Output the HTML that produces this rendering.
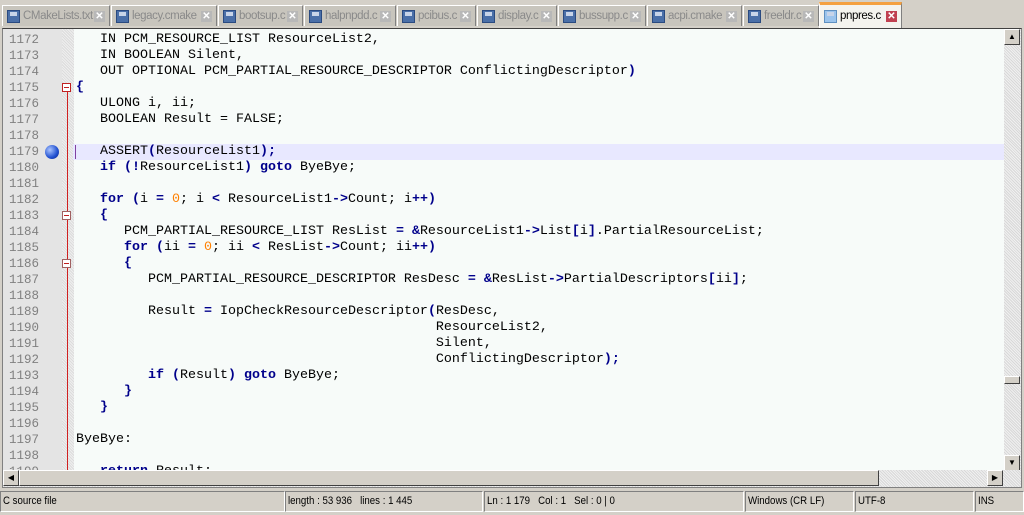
<!DOCTYPE html>
<html><head><meta charset="utf-8"><style>
body{margin:0;width:1024px;height:515px;background:#d4d0c8;position:relative;overflow:hidden;font-family:"Liberation Sans",sans-serif}
.tab{position:absolute;top:5px;height:21px;background:#c8c5bd;border:1px solid #fff;border-right-color:#808080;border-bottom:none;font-size:11.5px;letter-spacing:-0.4px;color:#8a8a8a;line-height:21px;box-sizing:border-box;white-space:nowrap}
.tab .ic{position:absolute;left:4px;top:4px;width:13px;height:13px;background:#4a6fa8;border:1px solid #2a4a80;box-sizing:border-box}
.tab .ic:after{content:"";position:absolute;left:2px;top:1px;width:7px;height:4px;background:#c8d4e8}
.tab .t{position:absolute;left:20px;top:0}
.tab .x{position:absolute;right:4px;top:5px;width:11px;height:11px;background:#b8b8b8;color:#fff;font-size:10px;line-height:11px;text-align:center;font-weight:bold;letter-spacing:0}
.tab.act{top:2px;height:26px;background:#f4f3ee;color:#000;border-top:3px solid #f4a040;line-height:22px}
.tab.act .ic{background:#9cc4ec;border-color:#6090c0;top:5px}
.tab.act .x{background:#c04050;top:6px}
#ed{position:absolute;left:2px;top:28px;width:1020px;height:460px;border:1px solid #808080;border-top-color:#404040;box-sizing:border-box;background:#f7fbf9;overflow:hidden}
#num{position:absolute;left:0;top:0;width:59px;height:442px;background:#e4e4e4}
#fold{position:absolute;left:59px;top:0;width:12px;height:442px;background:repeating-linear-gradient(45deg,#eee 0 1px,#dcdcdc 1px 2px)}
#fl{position:absolute;left:64px;top:58px;width:1px;height:384px;background:#d02020}
.ln{position:absolute;left:0;width:1002px;height:16px;font-family:"Liberation Mono",monospace;font-size:13.33px;line-height:16px;white-space:pre;color:#000}
.ln .n{position:absolute;left:6px;color:#808080;font-size:12.5px}
.ln .c{position:absolute;left:73px}
.k{color:#00008b;font-weight:bold}.o{color:#00008b;font-weight:bold}.d{color:#ff8000}
.cur{background:#e8e8ff}
.box{position:absolute;left:59px;top:3px;width:9px;height:9px;border:1px solid #c02020;box-sizing:border-box;background:#fff}
.box:after{content:"";position:absolute;left:1px;top:3px;width:5px;height:1px;background:#c02020}
.box.g{border-color:#a06060}
#vs{position:absolute;right:0;top:0;width:17px;height:442px;background:repeating-linear-gradient(45deg,#f0f0f0 0 1px,#d8d8d8 1px 2px)}
#hs{position:absolute;left:0;bottom:0;width:1018px;height:17px;background:repeating-linear-gradient(45deg,#f0f0f0 0 1px,#d8d8d8 1px 2px)}
.btn{position:absolute;width:16px;height:16px;background:#d4d0c8;border:1px solid;border-color:#fff #404040 #404040 #fff;box-sizing:border-box;font-size:8px;line-height:14px;text-align:center;color:#000}
.sb{position:absolute;top:491px;height:21px;border:1px solid;border-color:#808080 #fff #fff #808080;box-sizing:border-box;font-size:11px;line-height:19px;padding-left:2px;color:#000;white-space:nowrap}
.sb span{display:inline-block;transform:scaleX(.88);transform-origin:left}
</style></head><body>
<div class="tab" style="left:2px;width:108px"><div class="ic"></div><span class="t">CMakeLists.txt</span><div class="x">✕</div></div>
<div class="tab" style="left:111px;width:106px"><div class="ic"></div><span class="t">legacy.cmake</span><div class="x">✕</div></div>
<div class="tab" style="left:218px;width:85px"><div class="ic"></div><span class="t">bootsup.c</span><div class="x">✕</div></div>
<div class="tab" style="left:304px;width:92px"><div class="ic"></div><span class="t">halpnpdd.c</span><div class="x">✕</div></div>
<div class="tab" style="left:397px;width:79px"><div class="ic"></div><span class="t">pcibus.c</span><div class="x">✕</div></div>
<div class="tab" style="left:477px;width:80px"><div class="ic"></div><span class="t">display.c</span><div class="x">✕</div></div>
<div class="tab" style="left:558px;width:88px"><div class="ic"></div><span class="t">bussupp.c</span><div class="x">✕</div></div>
<div class="tab" style="left:647px;width:95px"><div class="ic"></div><span class="t">acpi.cmake</span><div class="x">✕</div></div>
<div class="tab" style="left:743px;width:76px"><div class="ic"></div><span class="t">freeldr.c</span><div class="x">✕</div></div>
<div class="tab act" style="left:819px;width:83px"><div class="ic"></div><span class="t">pnpres.c</span><div class="x">✕</div></div>

<div id="ed">
<div id="num"></div><div id="fold"></div><div id="fl"></div>
<div class="ln" style="top:3px"><span class="n">1172</span><span class="c">   IN PCM_RESOURCE_LIST ResourceList2,</span></div>
<div class="ln" style="top:19px"><span class="n">1173</span><span class="c">   IN BOOLEAN Silent,</span></div>
<div class="ln" style="top:35px"><span class="n">1174</span><span class="c">   OUT OPTIONAL PCM_PARTIAL_RESOURCE_DESCRIPTOR ConflictingDescriptor<span class="o">)</span></span></div>
<div class="ln" style="top:51px"><span class="n">1175</span><div class="box"></div><span class="c"><span class="o">{</span></span></div>
<div class="ln" style="top:67px"><span class="n">1176</span><span class="c">   ULONG i, ii;</span></div>
<div class="ln" style="top:83px"><span class="n">1177</span><span class="c">   BOOLEAN Result = FALSE;</span></div>
<div class="ln" style="top:99px"><span class="n">1178</span><span class="c"></span></div>
<div class="ln" style="top:115px"><div class="cur" style="position:absolute;left:70px;width:932px;height:16px"></div><span class="n">1179</span><div style="position:absolute;left:42px;top:1px;width:14px;height:14px;border-radius:50%;background:radial-gradient(circle at 35% 35%,#aac4ff,#2050d0 60%,#102080)"></div><div style="position:absolute;left:72px;top:1px;width:1px;height:14px;background:#8040a0"></div><span class="c">   ASSERT<span class="o">(</span>ResourceList1<span class="o">);</span></span></div>
<div class="ln" style="top:131px"><span class="n">1180</span><span class="c">   <span class="k">if</span> <span class="o">(!</span>ResourceList1<span class="o">)</span> <span class="k">goto</span> ByeBye;</span></div>
<div class="ln" style="top:147px"><span class="n">1181</span><span class="c"></span></div>
<div class="ln" style="top:163px"><span class="n">1182</span><span class="c">   <span class="k">for</span> <span class="o">(</span>i <span class="o">=</span> <span class="d">0</span>; i <span class="o">&lt;</span> ResourceList1<span class="o">-&gt;</span>Count; i<span class="o">++)</span></span></div>
<div class="ln" style="top:179px"><span class="n">1183</span><div class="box g"></div><span class="c">   <span class="o">{</span></span></div>
<div class="ln" style="top:195px"><span class="n">1184</span><span class="c">      PCM_PARTIAL_RESOURCE_LIST ResList <span class="o">=</span> <span class="o">&amp;</span>ResourceList1<span class="o">-&gt;</span>List<span class="o">[</span>i<span class="o">]</span>.PartialResourceList;</span></div>
<div class="ln" style="top:211px"><span class="n">1185</span><span class="c">      <span class="k">for</span> <span class="o">(</span>ii <span class="o">=</span> <span class="d">0</span>; ii <span class="o">&lt;</span> ResList<span class="o">-&gt;</span>Count; ii<span class="o">++)</span></span></div>
<div class="ln" style="top:227px"><span class="n">1186</span><div class="box g"></div><span class="c">      <span class="o">{</span></span></div>
<div class="ln" style="top:243px"><span class="n">1187</span><span class="c">         PCM_PARTIAL_RESOURCE_DESCRIPTOR ResDesc <span class="o">=</span> <span class="o">&amp;</span>ResList<span class="o">-&gt;</span>PartialDescriptors<span class="o">[</span>ii<span class="o">]</span>;</span></div>
<div class="ln" style="top:259px"><span class="n">1188</span><span class="c"></span></div>
<div class="ln" style="top:275px"><span class="n">1189</span><span class="c">         Result <span class="o">=</span> IopCheckResourceDescriptor<span class="o">(</span>ResDesc,</span></div>
<div class="ln" style="top:291px"><span class="n">1190</span><span class="c">                                             ResourceList2,</span></div>
<div class="ln" style="top:307px"><span class="n">1191</span><span class="c">                                             Silent,</span></div>
<div class="ln" style="top:323px"><span class="n">1192</span><span class="c">                                             ConflictingDescriptor<span class="o">);</span></span></div>
<div class="ln" style="top:339px"><span class="n">1193</span><span class="c">         <span class="k">if</span> <span class="o">(</span>Result<span class="o">)</span> <span class="k">goto</span> ByeBye;</span></div>
<div class="ln" style="top:355px"><span class="n">1194</span><span class="c">      <span class="o">}</span></span></div>
<div class="ln" style="top:371px"><span class="n">1195</span><span class="c">   <span class="o">}</span></span></div>
<div class="ln" style="top:387px"><span class="n">1196</span><span class="c"></span></div>
<div class="ln" style="top:403px"><span class="n">1197</span><span class="c">ByeBye:</span></div>
<div class="ln" style="top:419px"><span class="n">1198</span><span class="c"></span></div>
<div class="ln" style="top:435px"><span class="n">1199</span><span class="c">   <span class="k">return</span> Result;</span></div>
<div id="vs"><div class="btn" style="left:0;top:0">▲</div><div class="btn" style="left:0;top:347px;height:8px;line-height:6px"></div><div class="btn" style="left:0;bottom:0">▼</div></div>
<div id="hs"><div class="btn" style="left:0;top:0">◀</div><div class="btn" style="left:16px;top:0;width:860px"></div><div class="btn" style="left:984px;top:0">▶</div></div>
</div>

<div class="sb" style="left:0;width:285px"><span>C source file</span></div>
<div class="sb" style="left:285px;width:198px"><span>length : 53 936 &nbsp;&nbsp;lines : 1 445</span></div>
<div class="sb" style="left:484px;width:260px"><span>Ln : 1 179 &nbsp;&nbsp;Col : 1 &nbsp;&nbsp;Sel : 0 | 0</span></div>
<div class="sb" style="left:745px;width:109px"><span>Windows (CR LF)</span></div>
<div class="sb" style="left:855px;width:119px"><span>UTF-8</span></div>
<div class="sb" style="left:975px;width:49px"><span>INS</span></div>
</body></html>
